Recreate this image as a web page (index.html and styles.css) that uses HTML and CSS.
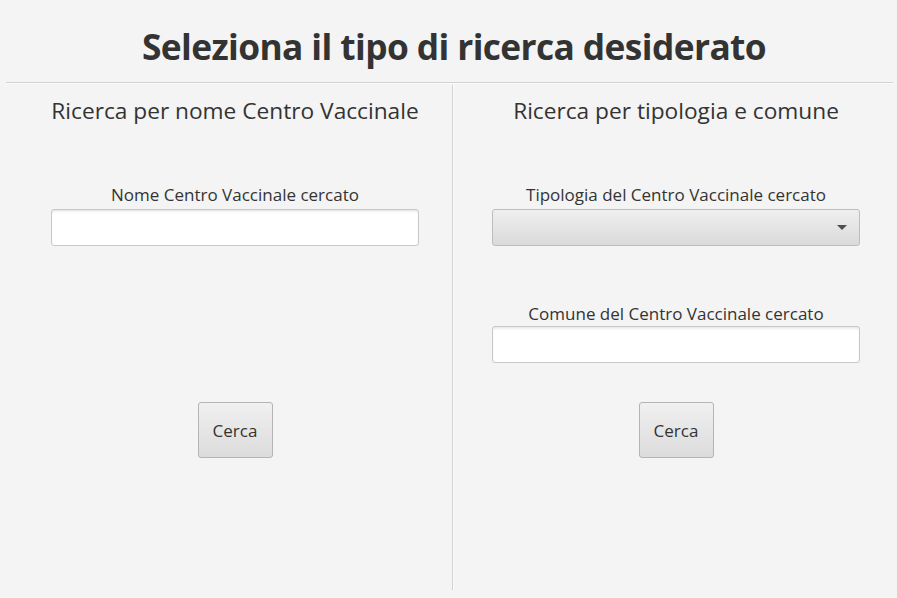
FILE: index.html
```html
<!DOCTYPE html>
<html lang="it">
<head>
<meta charset="utf-8">
<title>Ricerca Centro Vaccinale</title>
<link rel="stylesheet" href="styles.css">
</head>
<body>
<div class="app">
  <header class="header">
    <h1 class="title">Seleziona il tipo di ricerca desiderato</h1>
  </header>
  <div class="hsep"></div>
  <main class="columns">
    <section class="col col-left">
      <h2 class="subtitle">Ricerca per nome Centro Vaccinale</h2>
      <label class="label label-first">Nome Centro Vaccinale cercato</label>
      <input class="field" type="text">
      <div class="btn-row btn-row-left">
        <button class="btn">Cerca</button>
      </div>
    </section>
    <div class="vsep"></div>
    <section class="col col-right">
      <h2 class="subtitle">Ricerca per tipologia e comune</h2>
      <label class="label label-first">Tipologia del Centro Vaccinale cercato</label>
      <div class="combo"><span class="arrow"></span></div>
      <label class="label label-second">Comune del Centro Vaccinale cercato</label>
      <input class="field field-second" type="text">
      <div class="btn-row btn-row-right">
        <button class="btn">Cerca</button>
      </div>
    </section>
  </main>
</div>
</body>
</html>
```

FILE: styles.css
```css
* { box-sizing: border-box; }
html, body {
  margin: 0;
  padding: 0;
  background: #f4f4f4;
}
body {
  font-family: "Open Sans", "Noto Sans", sans-serif;
  color: #333333;
  width: 897px;
  height: 598px;
  overflow: hidden;
}
.app {
  display: flex;
  flex-direction: column;
  height: 598px;
}
.header {
  height: 82px;
  display: flex;
  justify-content: center;
  align-items: flex-start;
  padding-left: 11px;
}
.title {
  margin: 22px 0 0 0;
  font-size: 35.3px;
  font-weight: 700;
  line-height: 48px;
  letter-spacing: -0.6px;
  color: #333333;
}
.hsep {
  margin: 0 4px 0 6px;
  height: 2px;
  border-top: 1px solid #d2d2d2;
  border-bottom: 1px solid #fbfbfb;
}
.columns {
  display: flex;
  flex: 1;
  padding-top: 1px;
  padding-bottom: 8px;
}
.col {
  width: 368px;
  display: flex;
  flex-direction: column;
  align-items: stretch;
  text-align: center;
}
.col-left { margin-left: 51px; margin-right: 33px; }
.col-right { margin-left: 38px; }
.vsep {
  width: 2px;
  border-left: 1px solid #d2d2d2;
  border-right: 1px solid #fbfbfb;
}
.subtitle {
  margin: 11px 0 0 0;
  font-size: 22.7px;
  font-weight: 400;
  line-height: 30px;
  color: #333333;
  white-space: nowrap;
}
.label {
  display: block;
  font-size: 17px;
  line-height: 22px;
  color: #333333;
  white-space: nowrap;
}
.label-first { margin-top: 58px; }
.label-second { margin-top: 57px; }
.field {
  display: block;
  width: 368px;
  height: 37px;
  margin: 3px 0 0 0;
  border: 1px solid #c8c8c8;
  border-radius: 3px;
  background: linear-gradient(#f2f2f2 0px, #ffffff 4px, #ffffff 100%);
  box-shadow: inset 0 1px 2px rgba(0,0,0,0.06);
  outline: none;
  font: inherit;
}
.field-second { margin-top: 1px; }
.combo {
  position: relative;
  width: 368px;
  height: 37px;
  margin-top: 3px;
  border: 1px solid #bdbdbd;
  border-radius: 3px;
  background: linear-gradient(#efefef, #dadada);
}
.arrow {
  position: absolute;
  right: 12px;
  top: 15px;
  width: 0;
  height: 0;
  border-left: 5px solid transparent;
  border-right: 5px solid transparent;
  border-top: 5px solid #4e4e4e;
}
.btn-row {
  display: flex;
  justify-content: center;
}
.btn-row-left { margin-top: 156px; }
.btn-row-right { margin-top: 39px; }
.btn {
  width: 75px;
  height: 56px;
  border: 1px solid #b4b4b4;
  border-radius: 3px;
  background: linear-gradient(#f0f0f0, #dcdcdc);
  font-family: "Open Sans", "Noto Sans", sans-serif;
  font-size: 17px;
  color: #333333;
  padding: 0;
}
```
